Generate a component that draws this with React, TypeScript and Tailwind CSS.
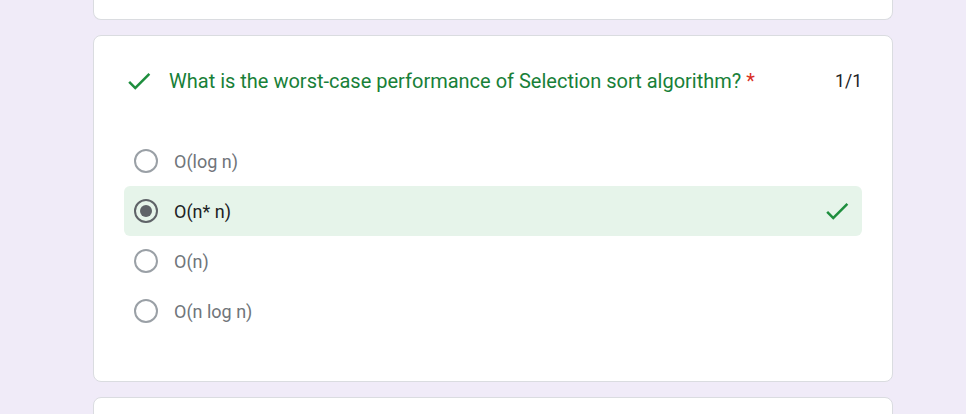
import React from "react";

const Check = ({ className }: { className?: string }) => (
  <svg viewBox="0 0 24 24" className={className} fill="currentColor">
    <path d="M9 16.17L4.83 12l-1.42 1.41L9 19 21 7l-1.41-1.41z" />
  </svg>
);

const options = ["O(log n)", "O(n* n)", "O(n)", "O(n log n)"];

export default function App() {
  return (
    <div
      className="h-[414px] bg-[#f0ebf8] overflow-hidden"
      style={{ fontFamily: "Roboto, 'Liberation Sans', sans-serif" }}
    >
      <div className="ml-[93px] w-[800px]">
        <div className="h-[20px] bg-white border border-t-0 border-[#dadce0] rounded-b-lg" />
        <div className="mt-[15px] h-[347px] bg-white border border-[#dadce0] rounded-lg pl-[30px] pr-[30px] pt-[30px]">
          <div className="flex items-start">
            <Check className="w-[30px] h-[30px] text-[#1e8e3e] shrink-0" />
            <div className="ml-[15px] text-[20px] leading-[30px] text-[#188038] flex-1">
              What is the worst-case performance of Selection sort algorithm?
              <span className="text-[#d93025] ml-[5px]">*</span>
            </div>
            <div className="text-[17.5px] leading-[30px] text-[#202124]">1/1</div>
          </div>
          <div className="mt-[40px] flex flex-col">
            {options.map((o, i) => {
              const sel = i === 1;
              return (
                <div
                  key={o}
                  className={`h-[50px] flex items-center pl-[10px] pr-[10px] rounded-md ${sel ? "bg-[#e6f4ea]" : ""}`}
                >
                  <div
                    className={`w-[24px] h-[24px] rounded-full border-2 flex items-center justify-center shrink-0 ${sel ? "border-[#5f6368]" : "border-[#9aa0a6]"}`}
                  >
                    {sel && <div className="w-[12px] h-[12px] rounded-full bg-[#5f6368]" />}
                  </div>
                  <div
                    className={`ml-[16px] text-[18px] flex-1 ${sel ? "text-[#202124]" : "text-[#70757a]"}`}
                  >
                    {o}
                  </div>
                  {sel && <Check className="w-[30px] h-[30px] text-[#1e8e3e]" />}
                </div>
              );
            })}
          </div>
        </div>
        <div className="mt-[15px] h-[40px] bg-white border border-[#dadce0] rounded-t-lg" />
      </div>
    </div>
  );
}
